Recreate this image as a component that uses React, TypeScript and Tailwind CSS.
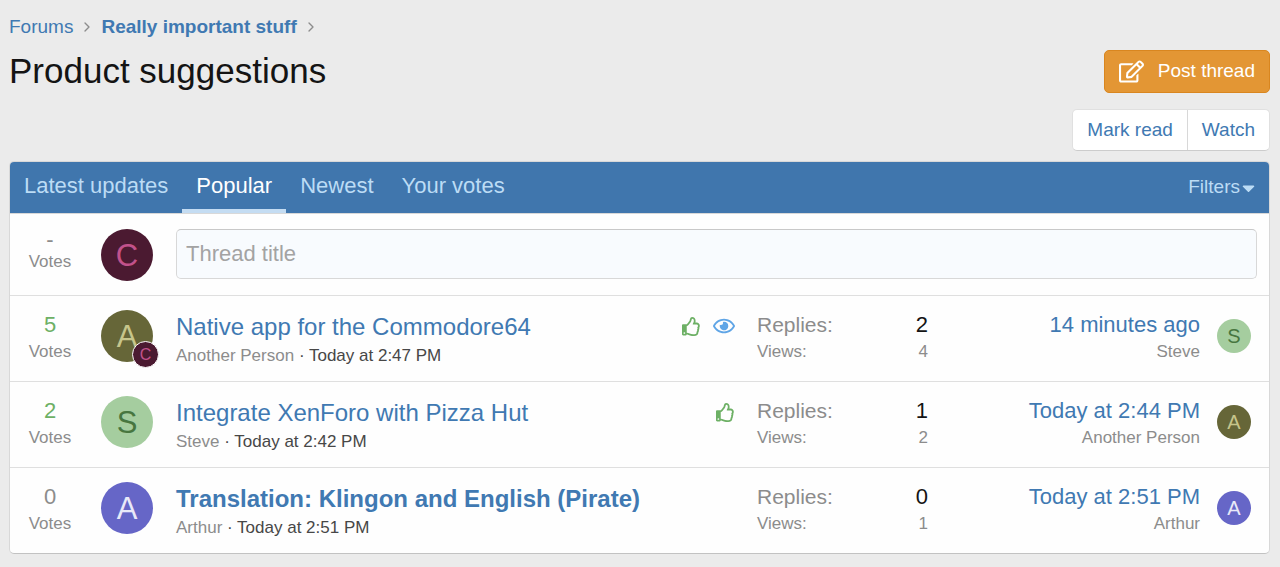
import React from 'react';
import { ChevronRight } from 'lucide-react';
import { FaCaretDown, FaRegEdit, FaRegEye, FaRegThumbsUp } from 'react-icons/fa';

const tabs = ['Latest updates', 'Popular', 'Newest', 'Your votes'];

const avatarColors: Record<string, string> = {
    Chris: 'bg-[#4b1a31] text-[#c2528b]',
    'Another Person': 'bg-[#666638] text-[#c6c58b]',
    Steve: 'bg-[#a5cd9f] text-[#47763f]',
    Arthur: 'bg-[#6666c7] text-[#e9e9f8]',
};

const threads = [
    {
        id: 1,
        title: 'Native app for the Commodore64',
        author: 'Another Person',
        posted: 'Today at 2:47 PM',
        votes: 5,
        voted: true,
        watched: true,
        participated: true,
        unread: false,
        replies: 2,
        views: 4,
        latest: '14 minutes ago',
        latestUser: 'Steve',
    },
    {
        id: 2,
        title: 'Integrate XenForo with Pizza Hut',
        author: 'Steve',
        posted: 'Today at 2:42 PM',
        votes: 2,
        voted: true,
        watched: false,
        participated: false,
        unread: false,
        replies: 1,
        views: 2,
        latest: 'Today at 2:44 PM',
        latestUser: 'Another Person',
    },
    {
        id: 3,
        title: 'Translation: Klingon and English (Pirate)',
        author: 'Arthur',
        posted: 'Today at 2:51 PM',
        votes: 0,
        voted: false,
        watched: false,
        participated: false,
        unread: true,
        replies: 0,
        views: 1,
        latest: 'Today at 2:51 PM',
        latestUser: 'Arthur',
    },
];

const avatarSizes = {
    lg: 'size-[52px] text-[31px]',
    md: 'size-[34px] text-[20px]',
    sm: 'size-[27px] text-[16px] border border-white',
};

const Avatar: React.FC<{ user: string; size: keyof typeof avatarSizes }> = ({ user, size }) => (
    <span className={`flex items-center justify-center rounded-full leading-none ${avatarSizes[size]} ${avatarColors[user]}`}>
        {user[0]}
    </span>
);

const Votes: React.FC<{ count: number | null }> = ({ count }) => (
    <div className="text-center text-[#8c8c8c]">
        <div className={`text-[22px] ${count === null ? 'leading-[21px]' : 'leading-[30px]'} ${count ? 'text-[#6db065]' : ''}`}>
            {count ?? '-'}
        </div>
        <div className="text-[17px] leading-[24px]">Votes</div>
    </div>
);

const ThreadRow: React.FC<{ thread: (typeof threads)[number] }> = ({ thread: t }) => (
    <li className="grid grid-cols-[80px_86px_1fr_171px_272px_69px] border-t border-[#dfdfdf] pt-[14px] pb-[13px]">
        <Votes count={t.votes} />
        <div className="pl-[11px]">
            <div className="relative w-[52px]">
                <Avatar user={t.author} size="lg" />
                {t.participated && (
                    <span className="absolute -right-1.5 -bottom-1.5">
                        <Avatar user="Chris" size="sm" />
                    </span>
                )}
            </div>
        </div>
        <div className="flex justify-between pr-[22px]">
            <div>
                <h3 className="text-[24px] leading-[34px]">
                    <a href="#" className={`text-[#4079b2] hover:underline ${t.unread ? 'font-bold' : ''}`}>{t.title}</a>
                </h3>
                <p className="text-[17px] leading-[24px] text-[#8c8c8c]">
                    {t.author} <span className="text-[#474747]">· {t.posted}</span>
                </p>
            </div>
            <div className="flex h-8 items-center gap-3">
                {t.voted && <FaRegThumbsUp className="size-[19px] text-[#6db065]" />}
                {t.watched && <FaRegEye className="size-[22px] text-[#5fa5e6]" />}
            </div>
        </div>
        <dl className="grid grid-cols-[1fr_auto] content-start text-[17px] leading-[24px] text-[#8c8c8c]">
            <dt className="text-[21px] leading-[30px]">Replies:</dt>
            <dd className="text-right text-[22px] leading-[30px] text-[#141414]">{t.replies}</dd>
            <dt>Views:</dt>
            <dd className="text-right">{t.views}</dd>
        </dl>
        <div className="text-right">
            <a href="#" className="block text-[22px] leading-[30px] text-[#4079b2] hover:underline">{t.latest}</a>
            <p className="text-[17px] leading-[24px] text-[#8c8c8c]">{t.latestUser}</p>
        </div>
        <div className="pt-[9px] pl-[17px]">
            <Avatar user={t.latestUser} size="md" />
        </div>
    </li>
);

export default function App() {
    return (
        <div className="min-h-screen bg-[#ebebeb] pt-[15px] pr-[10px] pb-[13px] pl-[9px] font-['Liberation_Sans',Arial,sans-serif]">
            <nav className="flex items-center gap-1.5 text-[19px] leading-[24px] text-[#4079b2]">
                <a href="#">Forums</a>
                <ChevronRight className="size-4 text-[#8c8c8c]" />
                <a href="#" className="font-bold">Really important stuff</a>
                <ChevronRight className="size-4 text-[#8c8c8c]" />
            </nav>

            <header className="mt-[11px] flex items-start justify-between">
                <h1 className="text-[35px] leading-[42px] text-[#141414]">Product suggestions</h1>
                <button className="flex h-[43px] items-center gap-[14px] rounded-[5px] border border-[#d9861f] bg-[#e39634] px-[14px] text-[19px] text-white">
                    <FaRegEdit className="size-[25px]" />
                    Post thread
                </button>
            </header>

            <div className="mt-4 flex justify-end">
                <div className="flex divide-x divide-[#d8d8d8] rounded-[5px] border border-[#e0e0e0] border-b-[#cccccc] bg-white text-[19px] leading-[40px] text-[#4079b2]">
                    <button className="px-[14px]">Mark read</button>
                    <button className="px-[14px]">Watch</button>
                </div>
            </div>

            <main className="mt-[10px] overflow-hidden rounded-[5px] border border-[#d8d8d8] border-b-[#c2c2c2] bg-[#fefefe]">
                <div className="flex items-stretch justify-between border-b border-[#d8d8d8] bg-[#4076ad] text-[#bcdcf5]">
                    <div className="flex text-[22px]">
                        {tabs.map((tab) => (
                            <a
                                key={tab}
                                href="#"
                                className={`border-b-4 px-[14px] leading-[47px] ${tab === 'Popular' ? 'border-[#c4dcf2] text-white' : 'border-transparent'}`}
                            >
                                {tab}
                            </a>
                        ))}
                    </div>
                    <button className="flex items-center gap-0.5 pr-[14px] text-[19px]">
                        Filters
                        <FaCaretDown className="h-5 w-[13px]" />
                    </button>
                </div>

                <div className="grid grid-cols-[80px_86px_1fr] pt-[15px] pb-[14px] pr-3">
                    <Votes count={null} />
                    <div className="pl-[11px]">
                        <Avatar user="Chris" size="lg" />
                    </div>
                    <input
                        type="text"
                        aria-label="Thread title"
                        placeholder="Thread title"
                        className="h-[50px] w-full rounded-[5px] border border-[#d8d8d8] border-t-[#c8c8c8] bg-[#f8fbfe] px-[9px] text-[22px] text-[#141414] placeholder:text-[#a3a3a3]"
                    />
                </div>

                <ul>
                    {threads.map((t) => (
                        <ThreadRow key={t.id} thread={t} />
                    ))}
                </ul>
            </main>
        </div>
    );
}
